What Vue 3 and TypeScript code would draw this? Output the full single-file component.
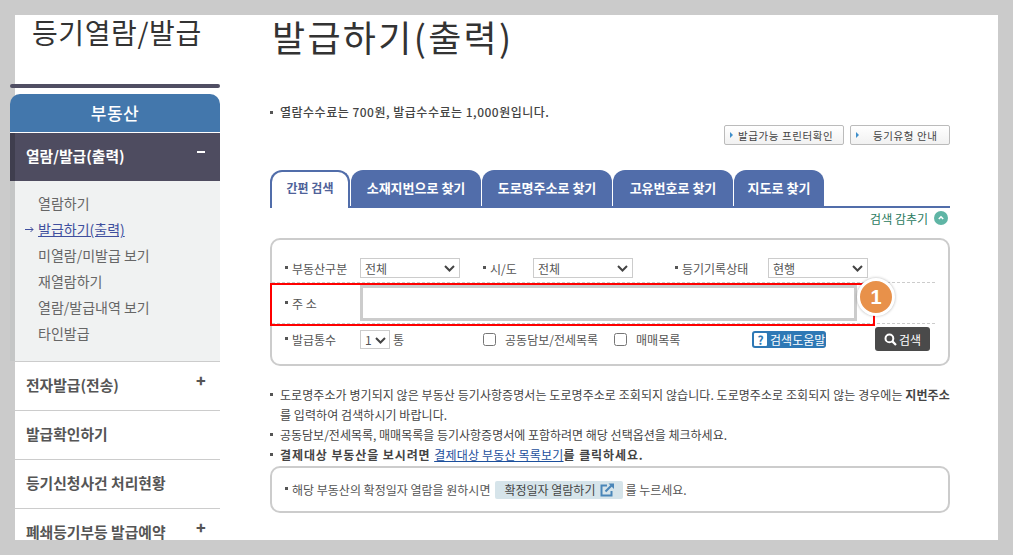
<script setup lang="ts">
const subItems = ['열람하기', '발급하기(출력)', '미열람/미발급 보기', '재열람하기', '열람/발급내역 보기', '타인발급']
const otherMenus = [
  { label: '전자발급(전송)', plus: true },
  { label: '발급확인하기', plus: false },
  { label: '등기신청사건 처리현황', plus: false },
  { label: '폐쇄등기부등 발급예약', plus: true },
]
const tabs = ['간편 검색', '소재지번으로 찾기', '도로명주소로 찾기', '고유번호로 찾기', '지도로 찾기']
</script>

<template>
  <div class="frame">
    <aside class="side">
      <div class="side-title">등기열람/발급</div>
      <div class="side-rule"></div>
      <div class="side-head">부동산</div>
      <div class="menu-open">
        <span>열람/발급(출력)</span><i class="minus"></i>
      </div>
      <ul class="sub">
        <li v-for="(s, i) in subItems" :key="s" :class="{ on: i === 1 }">
          <svg v-if="i === 1" class="arrow" width="9" height="7" viewBox="0 0 9 7"><path d="M0 3.5H8M5.5 1L8 3.5L5.5 6" fill="none" stroke="#3f4f9e" stroke-width="1" /></svg>
          <span>{{ s }}</span>
        </li>
      </ul>
      <div v-for="m in otherMenus" :key="m.label" class="menu">
        <span>{{ m.label }}</span>
        <b v-if="m.plus" class="plus">+</b>
      </div>
    </aside>

    <main class="main">
      <h1>발급하기(출력)</h1>
      <p class="fee"><i class="dot"></i>열람수수료는 700원, 발급수수료는 1,000원입니다.</p>
      <div class="links">
        <button class="link-btn w120"><i class="tri"></i>발급가능 프린터확인</button>
        <button class="link-btn w100"><i class="tri"></i><span class="pad">등기유형 안내</span></button>
      </div>
      <div class="tabs">
        <div v-for="(t, i) in tabs" :key="t" class="tab" :class="['t' + i, { active: i === 0 }]">{{ t }}</div>
      </div>
      <div class="toggle">
        <span>검색 감추기</span>
        <svg width="14" height="14" viewBox="0 0 14 14"><circle cx="7" cy="7" r="7" fill="#5fb5a5" /><path d="M4.8 8L7 5.8L9.2 8" fill="none" stroke="#fff" stroke-width="1.6" /></svg>
      </div>

      <section class="box">
        <div class="row r1">
          <label class="lb w75"><i class="dot"></i>부동산구분</label>
          <div class="sel w100"><select><option>전체</option></select><svg width="11" height="7" viewBox="0 0 11 7"><path d="M1 1L5.5 5.5L10 1" fill="none" stroke="#444" stroke-width="2" /></svg></div>
          <label class="lb w50 ml23"><i class="dot"></i>시/도</label>
          <div class="sel w100"><select><option>전체</option></select><svg width="11" height="7" viewBox="0 0 11 7"><path d="M1 1L5.5 5.5L10 1" fill="none" stroke="#444" stroke-width="2" /></svg></div>
          <label class="lb w93 ml42"><i class="dot"></i>등기기록상태</label>
          <div class="sel w100"><select><option>현행</option></select><svg width="11" height="7" viewBox="0 0 11 7"><path d="M1 1L5.5 5.5L10 1" fill="none" stroke="#444" stroke-width="2" /></svg></div>
        </div>
        <div class="row r2">
          <label class="lb w75"><i class="dot"></i>주 소</label>
          <input class="addr" type="text" />
        </div>
        <div class="row r3">
          <label class="lb w75"><i class="dot"></i>발급통수</label>
          <div class="sel w30"><select><option>1</option></select><svg width="11" height="7" viewBox="0 0 11 7"><path d="M1 1L5.5 5.5L10 1" fill="none" stroke="#444" stroke-width="2" /></svg></div>
          <span class="tong">통</span>
          <label class="chk c1"><input type="checkbox" />공동담보/전세목록</label>
          <label class="chk c2"><input type="checkbox" />매매목록</label>
          <span class="help"><b>?</b>검색도움말</span>
          <button class="search">
            <svg width="13" height="13" viewBox="0 0 13 13"><circle cx="5.4" cy="5.4" r="3.9" fill="none" stroke="#fff" stroke-width="2" /><path d="M8.4 8.4L12 12" stroke="#fff" stroke-width="2.2" /></svg>검색
          </button>
        </div>
        <div class="redbox"></div>
        <div class="badge">1</div>
      </section>

      <ul class="notes">
        <li class="tight">도로명주소가 병기되지 않은 부동산 등기사항증명서는 도로명주소로 조회되지 않습니다. 도로명주소로 조회되지 않는 경우에는 <b>지번주소</b>를 입력하여 검색하시기 바랍니다.</li>
        <li>공동담보/전세목록, 매매목록을 등기사항증명서에 포함하려면 해당 선택옵션을 체크하세요.</li>
        <li class="strong"><b>결제대상 부동산을 보시려면 <a>결제대상 부동산 목록보기</a>를 클릭하세요.</b></li>
      </ul>

      <section class="box2">
        <i class="dot"></i><span>해당 부동산의 확정일자 열람을 원하시면</span>
        <span class="confirm"><span>확정일자 열람하기</span>
          <svg width="15" height="14" viewBox="0 0 15 14"><path d="M7 2.5H1.5V12.5H11.5V8" fill="none" stroke="#4a86b8" stroke-width="2" /><path d="M5.5 8.5L12 2" stroke="#4a86b8" stroke-width="2.2" /><path d="M8.5 0.5H14V6Z" fill="#4a86b8" /></svg>
        </span>
        <span>를 누르세요.</span>
      </section>
    </main>
  </div>
</template>

<style>
html, body { margin: 0; background: #cbcbcb; }
</style>

<style scoped>
* { box-sizing: border-box; }
.frame {
  display: flex;
  width: 983px;
  height: 525px;
  margin: 15px 0 0 15px;
  background: #fff;
  clip-path: inset(0 0 0 -5px);
  font-family: "Noto Sans CJK KR", "Noto Sans", sans-serif;
  font-size: 12px;
  color: #444;
}
ul { list-style: none; margin: 0; padding: 0; }
.side { width: 210px; margin-left: -5px; flex: none; }
.side-title { height: 69px; padding-left: 22px; font-size: 28px; line-height: 34px; letter-spacing: 0.6px; color: #333; white-space: nowrap; }
.side-rule { height: 4px; border-radius: 2px; background: #504e63; margin-bottom: 6px; }
.side-head { height: 38px; border-radius: 10px 10px 0 0; background: #4377ac; color: #fff; font-size: 17px; letter-spacing: 0.5px; line-height: 37px; text-align: center; font-weight: 500; }
.menu-open { position: relative; height: 49px; margin-top: 0; border-top: 1px solid #fff; background: #4e4c60; color: #fff; font-size: 14.8px; font-weight: 700; padding: 13px 0 0 16px; line-height: 19px; }
.menu-open::before, .sub::before { content: ""; position: absolute; left: 0; top: 0; bottom: 0; width: 5px; background: rgba(0, 0, 0, .18); }
.minus { position: absolute; left: 187px; top: 18px; width: 8px; height: 2px; background: #fff; }
.sub { position: relative; height: 180px; padding-top: 9px; background: #f0f2f2; border-bottom: 0; }
.sub li { position: relative; height: 26px; line-height: 26px; padding-left: 28px; font-size: 14px; color: #666; white-space: nowrap; }
.sub li.on { color: #3f4f9e; }
.sub li.on span { text-decoration: underline; }
.arrow { position: absolute; left: 15px; top: 10px; }
.menu { position: relative; height: 49px; border-top: 1px solid #ccc; padding: 13px 0 0 16px; line-height: 19px; font-size: 14.8px; font-weight: 700; color: #555; white-space: nowrap; }
.plus { position: absolute; left: 186px; top: 10px; font-size: 16px; line-height: 16px; color: #555; }

.main { width: 680px; margin-left: 50px; flex: none; }
h1 { margin: 0; height: 42px; padding-left: 2px; font-size: 36px; line-height: 42px; font-weight: 400; letter-spacing: 2.3px; color: #333; white-space: nowrap; }
.dot { display: inline-block; width: 3px; height: 3px; background: #555; vertical-align: middle; margin-right: 4px; position: relative; top: -1px; flex: none; }
.fee { margin: 46px 0 0; height: 18px; line-height: 18px; font-weight: 500; color: #444; letter-spacing: 0.5px; white-space: nowrap; }
.fee .dot { margin-right: 7px; }
.links { display: flex; justify-content: flex-end; gap: 6px; margin-top: 4px; }
.link-btn { display: flex; align-items: center; height: 20px; padding: 0 0 0 5px; border: 1px solid #bbb; border-radius: 2px; background: linear-gradient(#fff, #f1f1f1); font: inherit; font-size: 10.5px; letter-spacing: 0.6px; color: #444; white-space: nowrap; }
.w120 { width: 120px; }
.w100 { width: 100px; }
.pad { margin-left: 9px; }
.tri { width: 0; height: 0; margin-right: 5px; border-left: 3px solid #3f8fcb; border-top: 3px solid transparent; border-bottom: 3px solid transparent; }
.tabs { display: flex; gap: 1px; height: 38px; margin-top: 25px; border-bottom: 2px solid #516daa; }
.tab { height: 36px; border-radius: 12px 12px 0 0; background: #516daa; color: #fff; font-size: 13px; font-weight: 700; line-height: 36px; text-align: center; white-space: nowrap; }
.t0 { width: 80px; height: 38px; border: 2px solid #516daa; border-bottom: 0; background: #fff; color: #4f6299; line-height: 31px; font-size: 12px; }
.t1, .t2 { width: 130px; }
.t3 { width: 120px; }
.t4 { width: 90px; }
.toggle { display: flex; align-items: center; justify-content: flex-end; gap: 6px; height: 20px; padding-right: 2px; color: #2a7a60; font-size: 12px; }
.box { position: relative; height: 128px; margin-top: 10px; border: 2px solid #ccc; border-radius: 10px; }
.row { display: flex; align-items: center; margin-right: 13px; padding-left: 13px; color: #555; }
.r1 { padding-top: 18px; padding-bottom: 4px; border-bottom: 1px dashed #ccc; height: 43px; }
.r2 { height: 41px; padding-top: 2px; padding-bottom: 2px; border-bottom: 1px dashed #ccc; }
.r3 { height: 30px; padding-top: 3px; padding-bottom: 3px; }
.lb { display: flex; align-items: center; white-space: nowrap; }
.w75 { width: 75px; flex: none; }
.w50 { width: 50px; flex: none; }
.w93 { width: 93px; flex: none; }
.ml23 { margin-left: 23px; }
.ml42 { margin-left: 42px; }
.sel { position: relative; flex: none; height: 20px; }
.w30 { width: 30px; height: 19px; }
.sel select { appearance: none; width: 100%; height: 100%; padding: 0 0 0 4px; border: 1px solid #ccc; border-radius: 0; background: #fff; font: inherit; font-size: 12px; color: #555; }
.sel svg { position: absolute; right: 5px; top: 7px; pointer-events: none; }
.w30 svg { right: 4px; }
.addr { width: 497px; height: 36px; border: 3px solid #ccc; background: #fff; padding: 0; outline: 0; }
.tong { margin-left: 3px; }
.chk { display: flex; align-items: center; white-space: nowrap; }
.chk input { width: 13px; height: 13px; margin: 0 9px 0 0; flex: none; }
.c1 { margin-left: 79px; width: 131px; flex: none; }
.c2 { width: 138px; flex: none; }
.help { display: flex; align-items: center; gap: 3px; width: 74px; height: 17px; padding-left: 2px; background: #2e78b5; border-radius: 3px; color: #fff; font-size: 12px; white-space: nowrap; }
.help b { width: 13px; height: 13px; background: #fff; color: #2e78b5; text-align: center; line-height: 13px; font-size: 12px; font-weight: 700; border-radius: 1px; flex: none; }
.search { display: flex; align-items: center; justify-content: center; gap: 2px; width: 55px; height: 24px; margin-left: 49px; padding: 0; border: 0; border-radius: 3px; background: #4a4a4a; color: #fff; font: inherit; font-size: 12px; }
.redbox { position: absolute; left: -2px; top: 43px; width: 605px; height: 43px; border: 2px solid #f00; pointer-events: none; }
.badge { position: absolute; left: 585px; top: 38px; width: 38px; height: 38px; border: 3px solid #fff; border-radius: 50%; background: #e8914a; box-shadow: 0 0 3px rgba(0, 0, 0, .3); color: #fff; font: 700 20px/32px "Liberation Sans", sans-serif; text-align: center; }
.notes { margin-top: 19px; }
.notes li { position: relative; padding-left: 10px; line-height: 20px; letter-spacing: 0; color: #444; }
.notes li.tight { letter-spacing: 0.07px; }
.notes li::before { content: ""; position: absolute; left: 0; top: 8px; width: 3px; height: 3px; background: #555; }
.notes li b { color: #444; font-weight: 700; }
.notes li.strong b { letter-spacing: 0.9px; }
.notes a { color: #1c4f9c; font-weight: 400; letter-spacing: 0.2px; text-decoration: underline; }
.box2 { display: flex; align-items: center; height: 47px; margin-top: 1px; padding-left: 13px; border: 2px solid #ccc; border-radius: 10px; color: #555; white-space: nowrap; }
.confirm { display: flex; align-items: center; justify-content: space-between; height: 18px; margin: 0 2px 0 5px; padding: 0 8px 0 9px; width: 128px; border-radius: 2px; background: #d6e4ea; color: #444; }
</style>
